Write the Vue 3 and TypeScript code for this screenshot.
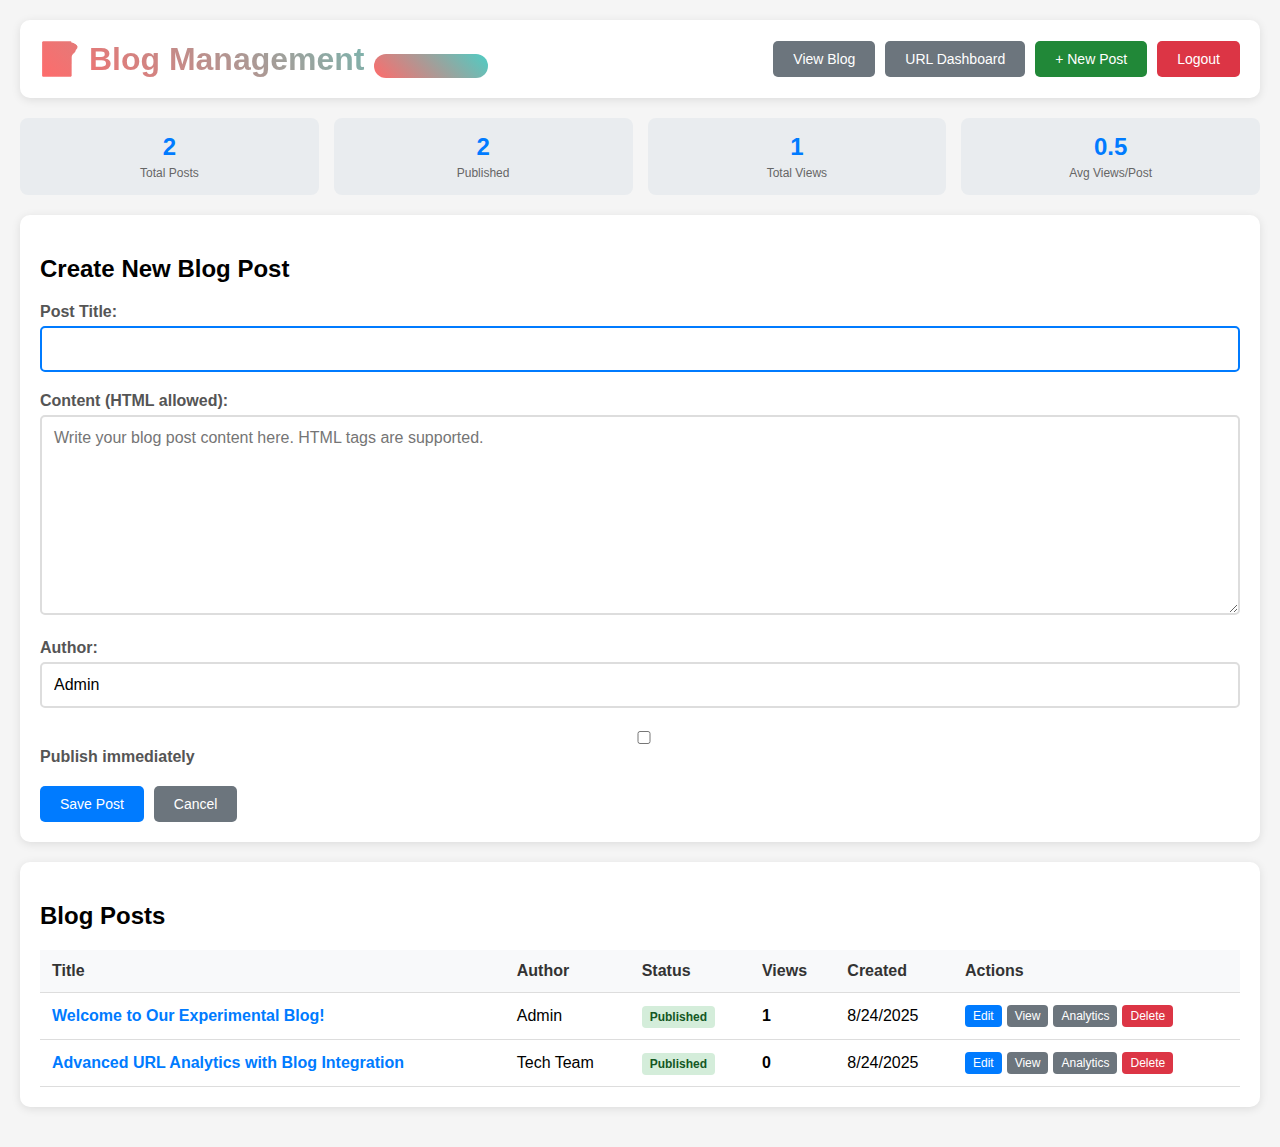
<script setup lang="ts">
interface Stat { value: string; label: string }
interface Post { title: string; author: string; views: number; created: string }
const stats: Stat[] = [
  { value: '2', label: 'Total Posts' },
  { value: '2', label: 'Published' },
  { value: '1', label: 'Total Views' },
  { value: '0.5', label: 'Avg Views/Post' },
]
const posts: Post[] = [
  { title: 'Welcome to Our Experimental Blog!', author: 'Admin', views: 1, created: '8/24/2025' },
  { title: 'Advanced URL Analytics with Blog Integration', author: 'Tech Team', views: 0, created: '8/24/2025' },
]
</script>

<template>
  <div class="page">
    <header class="card header">
      <h1 class="title">📝 Blog Management <span class="pill"></span></h1>
      <nav class="nav">
        <button class="btn gray">View Blog</button>
        <button class="btn gray">URL Dashboard</button>
        <button class="btn green">+ New Post</button>
        <button class="btn red">Logout</button>
      </nav>
    </header>

    <section class="stats">
      <div v-for="s in stats" :key="s.label" class="stat">
        <div class="stat-value">{{ s.value }}</div>
        <div class="stat-label">{{ s.label }}</div>
      </div>
    </section>

    <section class="card">
      <h2>Create New Blog Post</h2>
      <form @submit.prevent>
        <div class="group">
          <label for="t">Post Title:</label>
          <input id="t" class="field focused" type="text" />
        </div>
        <div class="group">
          <label for="c">Content (HTML allowed):</label>
          <textarea id="c" class="field area" placeholder="Write your blog post content here. HTML tags are supported."></textarea>
        </div>
        <div class="group">
          <label for="a">Author:</label>
          <input id="a" class="field" type="text" value="Admin" />
        </div>
        <div class="group">
          <input id="p" class="check" type="checkbox" />
          <label for="p">Publish immediately</label>
        </div>
        <div class="form-actions">
          <button class="btn blue">Save Post</button>
          <button class="btn gray" type="button">Cancel</button>
        </div>
      </form>
    </section>

    <section class="card">
      <h2>Blog Posts</h2>
      <table>
        <thead>
          <tr>
            <th>Title</th>
            <th>Author</th>
            <th>Status</th>
            <th>Views</th>
            <th>Created</th>
            <th>Actions</th>
          </tr>
        </thead>
        <tbody>
          <tr v-for="p in posts" :key="p.title">
            <td><a class="post-link" href="#">{{ p.title }}</a></td>
            <td>{{ p.author }}</td>
            <td><span class="badge">Published</span></td>
            <td><strong>{{ p.views }}</strong></td>
            <td>{{ p.created }}</td>
            <td>
              <div class="row-actions">
                <button class="small blue">Edit</button>
                <button class="small gray">View</button>
                <button class="small gray">Analytics</button>
                <button class="small red">Delete</button>
              </div>
            </td>
          </tr>
        </tbody>
      </table>
    </section>
  </div>
</template>

<style>
html, body {
  margin: 0;
  background: #f5f5f5;
}
</style>

<style scoped>
.page {
  box-sizing: border-box;
  min-height: 1147px;
  padding: 20px;
  font-family: "Liberation Sans", Arial, sans-serif;
  font-size: 16px;
  color: #000;
  background: #f5f5f5;
}
.card {
  background: #fff;
  border-radius: 10px;
  padding: 20px;
  margin-bottom: 20px;
  box-shadow: 0 2px 10px rgba(0, 0, 0, 0.1);
}
.header {
  display: flex;
  justify-content: space-between;
  align-items: center;
}
.title {
  margin: 0;
  font-size: 32px;
  font-weight: 700;
  background: linear-gradient(45deg, #ff6b6b, #4ecdc4);
  -webkit-background-clip: text;
  background-clip: text;
  -webkit-text-fill-color: transparent;
  color: transparent;
}
.pill {
  display: inline-block;
  width: 114px;
  height: 24px;
  margin-left: 1px;
  vertical-align: -8px;
  border-radius: 12px;
  background: linear-gradient(45deg, #ff6b6b, #4ecdc4);
}
.nav {
  display: flex;
  gap: 10px;
}
.btn {
  padding: 10px 20px;
  border: none;
  border-radius: 5px;
  font-family: inherit;
  font-size: 14px;
  line-height: 16px;
  color: #fff;
  cursor: pointer;
}
.gray { background: #6c757d; }
.green { background: #218838; }
.red { background: #dc3545; }
.blue { background: #007bff; }
.stats {
  display: grid;
  grid-template-columns: repeat(4, 1fr);
  gap: 15px;
  margin-bottom: 20px;
}
.stat {
  background: #e9ecef;
  border-radius: 8px;
  padding: 15px;
  text-align: center;
}
.stat-value {
  font-size: 24px;
  font-weight: 700;
  color: #007bff;
}
.stat-label {
  margin-top: 5px;
  font-size: 12px;
  color: #666;
}
h2 {
  margin: 20px 0;
  font-size: 24px;
  font-weight: 700;
}
.group {
  margin-bottom: 20px;
}
label {
  display: block;
  margin-bottom: 5px;
  font-weight: 700;
  color: #555;
}
.field {
  box-sizing: border-box;
  width: 100%;
  padding: 12px;
  border: 2px solid #ddd;
  border-radius: 5px;
  font-family: inherit;
  font-size: 16px;
  color: #000;
  background: #fff;
  outline: none;
}
.field.focused {
  border-color: #007bff;
}
.area {
  height: 200px;
  resize: vertical;
}
.check {
  width: 100%;
}
.form-actions {
  display: flex;
  gap: 10px;
}
table {
  width: 100%;
  border-collapse: collapse;
}
th, td {
  padding: 12px;
  text-align: left;
  border-bottom: 1px solid #ddd;
}
th {
  background: #f8f9fa;
  font-weight: 700;
  color: #333;
}
.post-link {
  font-weight: 700;
  color: #007bff;
  text-decoration: none;
}
.badge {
  padding: 4px 8px;
  border-radius: 4px;
  font-size: 12px;
  font-weight: 700;
  background: #d4edda;
  color: #155724;
}
.row-actions {
  display: flex;
  gap: 5px;
}
.small {
  padding: 4px 8px;
  border: none;
  border-radius: 4px;
  font-family: inherit;
  font-size: 12px;
  line-height: 14px;
  color: #fff;
  cursor: pointer;
}
</style>
